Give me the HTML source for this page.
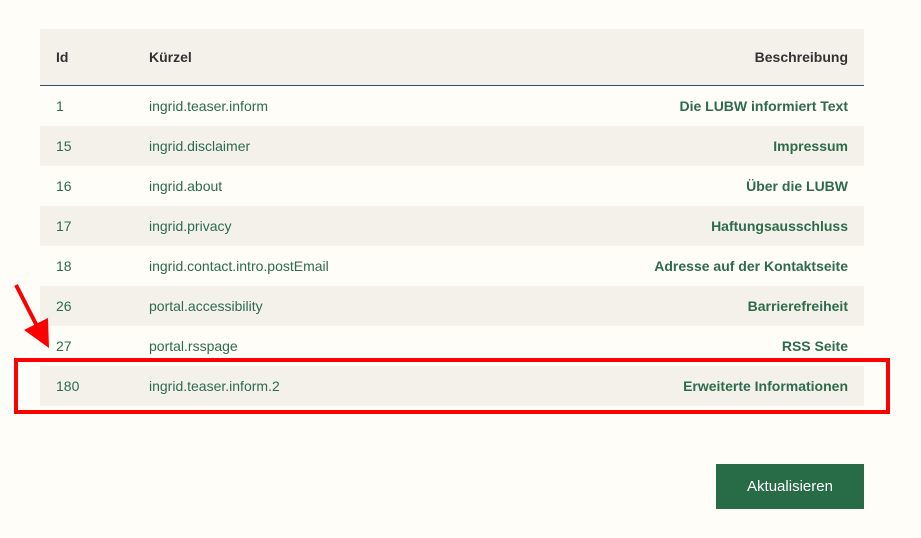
<!DOCTYPE html>
<html><head><meta charset="utf-8"><style>
body{margin:0;background:#fefdf8;width:921px;height:538px;position:relative;overflow:hidden;font-family:"Liberation Sans",sans-serif;}
table{position:absolute;left:40px;top:29px;width:824px;border-collapse:collapse;}
th{height:56px;background:#f3f1ea;color:#333;font-size:14px;font-weight:bold;text-align:left;border-bottom:1px solid #2b4f6e;padding:0;}
td{height:40px;padding:0;font-size:14px;color:#2d6b4a;}
tr.s td{background:#f3f1ea;}
.c1{padding-left:16px;width:93px;}
.r{text-align:right;padding-right:16px;font-weight:bold;}
.box{position:absolute;left:14px;top:358px;width:868px;height:48px;border:4px solid #f00;}
.btn{position:absolute;left:716px;top:464px;width:148px;height:45px;background:#276b47;color:#fff;font-size:15px;line-height:45px;text-align:center;}
</style></head><body>
<table>
<tr><th class="c1">Id</th><th>Kürzel</th><th class="r" style="color:#333">Beschreibung</th></tr>
<tr><td class="c1">1</td><td>ingrid.teaser.inform</td><td class="r">Die LUBW informiert Text</td></tr>
<tr class="s"><td class="c1">15</td><td>ingrid.disclaimer</td><td class="r">Impressum</td></tr>
<tr><td class="c1">16</td><td>ingrid.about</td><td class="r">Über die LUBW</td></tr>
<tr class="s"><td class="c1">17</td><td>ingrid.privacy</td><td class="r">Haftungsausschluss</td></tr>
<tr><td class="c1">18</td><td>ingrid.contact.intro.postEmail</td><td class="r">Adresse auf der Kontaktseite</td></tr>
<tr class="s"><td class="c1">26</td><td>portal.accessibility</td><td class="r">Barrierefreiheit</td></tr>
<tr><td class="c1">27</td><td>portal.rsspage</td><td class="r">RSS Seite</td></tr>
<tr class="s"><td class="c1">180</td><td>ingrid.teaser.inform.2</td><td class="r">Erweiterte Informationen</td></tr>
</table>
<div class="box"></div>
<svg style="position:absolute;left:0;top:0" width="921" height="538"><line x1="16" y1="285" x2="38" y2="328" stroke="#f00" stroke-width="4"/><polygon points="24,330 48,318 49,348" fill="#f00"/></svg>
<div class="btn">Aktualisieren</div>
</body></html>
